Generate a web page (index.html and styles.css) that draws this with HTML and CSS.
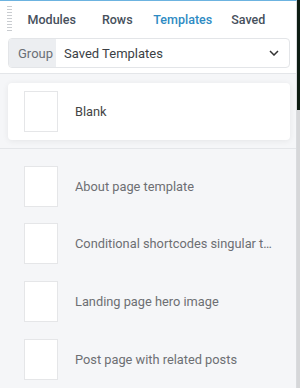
FILE: index.html
```html
<!DOCTYPE html>
<html lang="en">
<head>
    <meta charset="UTF-8">
    <title>Templates</title>
    <link rel="stylesheet" href="styles.css">
</head>
<body>

<div class="panel">
    <div class="panel-head">
        <div class="drag-handle"></div>
        <div class="tabs">
            <span class="tab">Modules</span>
            <span class="tab">Rows</span>
            <span class="tab active">Templates</span>
            <span class="tab">Saved</span>
        </div>
        <div class="group-select">
            <span class="group-label">Group</span>
            <span class="group-value">Saved Templates</span>
            <svg class="chevron" width="10" height="6" viewBox="0 0 10 6">
                <path d="M1 1l4 4 4-4" fill="none" stroke="#333" stroke-width="1.5"/>
            </svg>
        </div>
    </div>

    <div class="blank-area">
        <div class="template-card">
            <div class="thumb"></div>
            <span class="template-name">Blank</span>
        </div>
    </div>

    <div class="template-list">
        <div class="template-item">
            <div class="thumb"></div>
            <span class="template-name">About page template</span>
        </div>
        <div class="template-item">
            <div class="thumb"></div>
            <span class="template-name">Conditional shortcodes singular template</span>
        </div>
        <div class="template-item">
            <div class="thumb"></div>
            <span class="template-name">Landing page hero image</span>
        </div>
        <div class="template-item">
            <div class="thumb"></div>
            <span class="template-name">Post page with related posts</span>
        </div>
    </div>
</div>

</body>
</html>
```

FILE: styles.css
```css
body {
    margin: 0;
    height: 388px;
    overflow: hidden;
    font-family: 'Roboto', 'Liberation Sans', sans-serif;
    background: linear-gradient(#0d1c12 0, #0d1c12 110px, #d6d7d9 110px);
}

.panel {
    width: 297px;
    height: 388px;
    background-color: #f5f6f8;
    border-top: 1px solid #6cb3e0;
    border-right: 1px solid #d9dbde;
    box-sizing: border-box;
}

.panel-head {
    position: relative;
    background-color: #fff;
    border-bottom: 1px solid #e4e6e9;
    padding: 0 6px 5px 8px;
}

/* dotted grip on the left edge */
.drag-handle {
    position: absolute;
    left: 7px;
    top: 5px;
    width: 5px;
    height: 25px;
    background: repeating-linear-gradient(#c9ccd0 0, #c9ccd0 1px, transparent 1px, transparent 3px);
}

.tabs {
    display: grid;
    grid-template-columns: repeat(4, 65.5px);
    height: 37px;
    align-items: center;
    padding-left: 11px;
}

.tab {
    font-size: 12.5px;
    font-weight: 500;
    color: #46505c;
    text-align: center;
}

.tab.active {
    color: #2e8bc3;
}

.group-select {
    display: flex;
    align-items: center;
    height: 30px;
    border: 1px solid #e3e5e8;
    border-radius: 4px;
    overflow: hidden;
    box-sizing: border-box;
    font-size: 13px;
}

.group-label {
    background-color: #eceef1;
    color: #6a6f76;
    height: 100%;
    width: 47px;
    display: flex;
    align-items: center;
    padding-left: 9px;
    box-sizing: border-box;
}

.group-value {
    flex: 1;
    color: #3b3f45;
    padding-left: 8px;
}

.chevron {
    margin-right: 10px;
}

.blank-area {
    padding: 9px 6px 8px 8px;
    border-bottom: 1px solid #e4e6e9;
}

.template-card {
    display: flex;
    align-items: center;
    height: 57px;
    background-color: #fff;
    border-radius: 4px;
    box-shadow: 0 1px 6px rgba(0, 0, 0, 0.07);
    padding-left: 16px;
}

.template-card .template-name {
    color: #444;
}

.template-list {
    padding: 16px 0 0 24px;
}

.template-item {
    display: flex;
    align-items: center;
    height: 42px;
    margin-bottom: 15.7px;
}

.thumb {
    flex: none;
    width: 34px;
    height: 41px;
    background-color: #fff;
    border: 1px solid #e5e6e8;
    box-sizing: border-box;
}

.template-name {
    font-size: 12.8px;
    color: #6d6f73;
    margin-left: 17px;
    white-space: nowrap;
    overflow: hidden;
    text-overflow: ellipsis;
    max-width: 197px;
}
```
